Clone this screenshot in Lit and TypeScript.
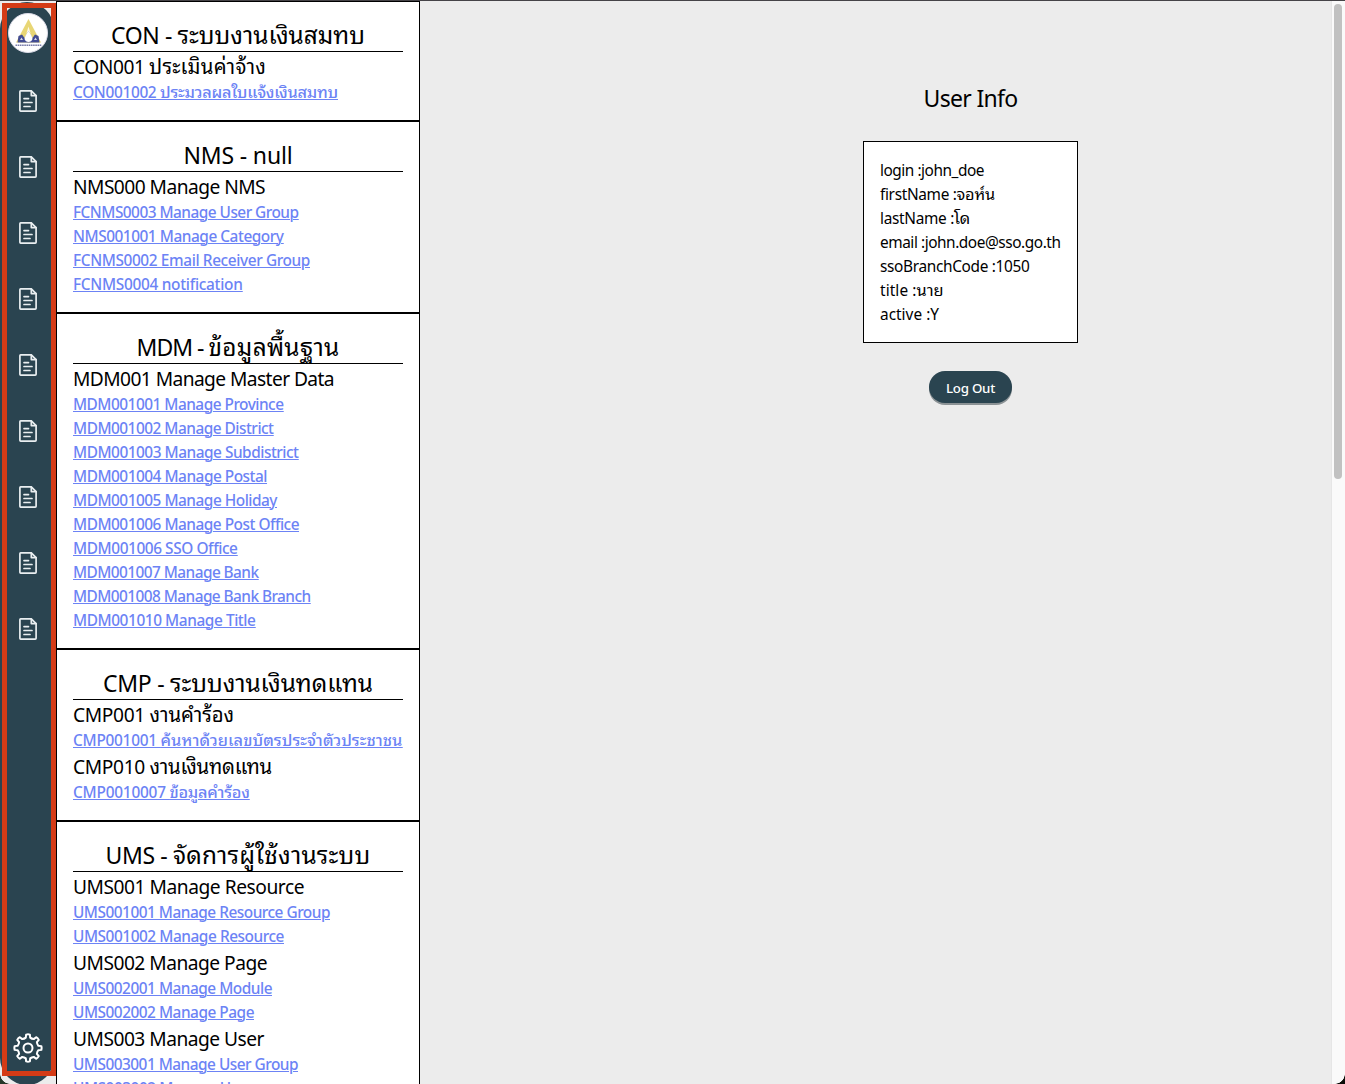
import { LitElement, html, css, svg } from "lit";
import { customElement } from "lit/decorators.js";

/** Text, its full width, and, where Thai follows Latin, the width of the Latin part. */
type Line = [text: string, width: number, lead?: number];
interface Group { head: Line; links: Line[] }
interface Module { title: Line; groups: Group[] }

const MODULES: Module[] = [
  {
    title: ["CON - ระบบงานเงินสมทบ", 254, 66.5],
    groups: [{ head: ["CON001 ประเมินค่าจ้าง", 193, 76], links: [["CON001002 ประมวลผลใบแจ้งเงินสมทบ", 265, 87]] }],
  },
  {
    title: ["NMS - null", 109],
    groups: [
      {
        head: ["NMS000 Manage NMS", 192],
        links: [
          ["FCNMS0003 Manage User Group", 225.5],
          ["NMS001001 Manage Category", 210.5],
          ["FCNMS0002 Email Receiver Group", 237],
          ["FCNMS0004 notification", 169.5],
        ],
      },
    ],
  },
  {
    title: ["MDM - ข้อมูลพื้นฐาน", 203, 72],
    groups: [
      {
        head: ["MDM001 Manage Master Data", 261],
        links: [
          ["MDM001001 Manage Province", 210.5],
          ["MDM001002 Manage District", 200.5],
          ["MDM001003 Manage Subdistrict", 225.5],
          ["MDM001004 Manage Postal", 194],
          ["MDM001005 Manage Holiday", 204],
          ["MDM001006 Manage Post Office", 226],
          ["MDM001006 SSO Office", 164.5],
          ["MDM001007 Manage Bank", 185.5],
          ["MDM001008 Manage Bank Branch", 237.5],
          ["MDM001010 Manage Title", 182.5],
        ],
      },
    ],
  },
  {
    title: ["CMP - ระบบงานเงินทดแทน", 270, 67],
    groups: [
      { head: ["CMP001 งานคำร้อง", 161, 76.5], links: [["CMP001001 ค้นหาด้วยเลขบัตรประจำตัวประชาชน", 329.5, 87.5]] },
      { head: ["CMP010 งานเงินทดแทน", 199, 76.5], links: [["CMP0010007 ข้อมูลคำร้อง", 176.5, 96.5]] },
    ],
  },
  {
    title: ["UMS - จัดการผู้ใช้งานระบบ", 265, 67.5],
    groups: [
      {
        head: ["UMS001 Manage Resource", 231],
        links: [["UMS001001 Manage Resource Group", 257], ["UMS001002 Manage Resource", 211]],
      },
      {
        head: ["UMS002 Manage Page", 194],
        links: [["UMS002001 Manage Module", 199], ["UMS002002 Manage Page", 181]],
      },
      {
        head: ["UMS003 Manage User", 191],
        links: [["UMS003001 Manage User Group", 225], ["UMS003002 Manage User", 179]],
      },
    ],
  },
];

const USER: Line[] = [
  ["login :john_doe", 104],
  ["firstName :จอห์น", 115, 76.5],
  ["lastName :โด", 90, 74],
  ["email :john.doe@sso.go.th", 180.5],
  ["ssoBranchCode :1050", 149.5],
  ["title :นาย", 63.5, 36.5],
  ["active :Y", 59],
];

/** A line of text whose runs are tracked so that each spans a given width. */
@customElement("fit-text")
class FitText extends LitElement {
  static properties = { line: { attribute: false } };
  declare line: Line;
  static styles = css`
    :host { display: inline-block; white-space: pre; vertical-align: top; text-decoration: inherit; }
    .run { text-decoration: inherit; }
    .thai { font-size: 1.06em; line-height: 0; }
  `;
  private get runs(): { text: string; width: number; thai: boolean }[] {
    const [text, width, lead] = this.line;
    if (lead === undefined) return [{ text, width, thai: false }];
    const cut = text.search(/[\u0e00-\u0e7f]/);
    return [
      { text: text.slice(0, cut), width: lead, thai: false },
      { text: text.slice(cut), width: width - lead, thai: true },
    ];
  }
  render() {
    return this.runs.map((r) => html`<span class="run ${r.thai ? "thai" : ""}">${r.text}</span>`);
  }
  async firstUpdated() {
    await document.fonts.ready;
    const spans = this.renderRoot.querySelectorAll<HTMLElement>(".run");
    this.runs.forEach((r, i) => {
      const run = spans[i];
      const natural = run.getBoundingClientRect().width;
      run.style.letterSpacing = "1px";
      const clusters = run.getBoundingClientRect().width - natural;
      run.style.letterSpacing = `${(r.width - natural) / clusters}px`;
    });
  }
}

const fit = (line: Line) => html`<fit-text .line=${line}></fit-text>`;

const pageIcon = svg`<svg class="page" viewBox="0 0 20 24" fill="none" stroke="#e9eef0" stroke-width="1.7" stroke-linejoin="round" stroke-linecap="round">
  <path d="M13.3 1.9H2.6Q1.9 1.9 1.9 2.7V21.2Q1.9 22.1 2.7 22.1H17.2Q18.1 22.1 18.1 21.2V6.6Z"/>
  <path d="M13.3 2V6.6H18"/>
  <path d="M6 9.6H10.5M6 13.5H14M6 17.5H12"/>
</svg>`;

const gearPath = (() => {
  const pts: string[] = [];
  const at = (r: number, deg: number) => {
    const a = ((deg - 90) * Math.PI) / 180;
    return `${(15 + r * Math.cos(a)).toFixed(2)} ${(15 + r * Math.sin(a)).toFixed(2)}`;
  };
  for (let i = 0; i < 8; i++) {
    const c = i * 45;
    pts.push(`${i ? "L" : "M"}${at(10.6, c - 12)}`);
    pts.push(`L${at(13.5, c - 8)}`, `Q${at(13.9, c)} ${at(13.5, c + 8)}`, `L${at(10.6, c + 12)}`);
    pts.push(`Q${at(9.8, c + 22.5)} ${at(10.6, c + 33)}`);
  }
  return pts.join("") + "Z";
})();

@customElement("app-root")
class AppRoot extends LitElement {
  static styles = css`
    :host { display: block; }
    * { box-sizing: border-box; }
    .frame {
      position: relative; display: flex; width: 1345px; height: 1084px; overflow: hidden;
      background: #ececec; border-top: 1px solid #454347; color: #000;
      font: 400 15.4px/24px "Noto Sans", "Noto Sans Thai Looped", "Sarabun", "Loma", "Noto Sans Thai", sans-serif;
    }
    .rail { width: 56px; flex: none; }
    .pill {
      width: 54px; height: 1083px; margin-top: 1px; border-radius: 27px; background: #2a4450;
      display: flex; flex-direction: column; align-items: center; padding: 11px 0 22px 2px;
    }
    .logo { width: 40px; height: 40px; flex: none; }
    .pages { display: flex; flex-direction: column; gap: 42px; margin-top: 36px; }
    .page { display: block; width: 20px; height: 24px; }
    .gear { width: 30px; height: 30px; margin-top: auto; }
    .marker {
      position: absolute; left: 2px; top: 2px; width: 54px; height: 1073px;
      border: 5px solid #d43b16;
    }
    .menu { width: 364px; flex: none; background: #fff; }
    .module { border: 1px solid #000; padding: 16px; }
    .title {
      height: 34px; border-bottom: 1px solid #000; text-align: center;
      font-size: 23px; line-height: 35px; white-space: nowrap;
    }
    .head { height: 28px; font-size: 19.2px; line-height: 30px; white-space: nowrap; }
    .link { display: block; height: 24px; line-height: 25px; font-weight: 500; color: #6c83f5; text-decoration: underline; white-space: nowrap;
      text-decoration-thickness: 1px; text-underline-offset: 1px; }
    .main {
      flex: 1; padding: 80px 0 0 190px; display: flex; flex-direction: column; align-items: center;
    }
    .heading { font-size: 23px; line-height: 34px; }
    .card { width: 215px; height: 202px; margin-top: 26px; border: 1px solid #000; background: #fff; padding: 16px; white-space: nowrap; }
    .row { height: 24px; line-height: 25px; }
    .button {
      width: 83px; height: 32px; margin-top: 28px; border: 0; border-radius: 16px; padding: 1px 0 0;
      background: #2a4450; color: #fff; font: 500 13.3px/32px "Noto Sans", sans-serif;
      box-shadow: 0 2px 0 #8b9295;
    }
    .track { width: 14px; flex: none; background: #fafafa; border-left: 1px solid #e6e6e6; padding: 3px 0 0 2px; }
    .thumb { width: 8px; height: 475px; border-radius: 4px; background: #c1c1c1; }
    .corner { position: absolute; bottom: 0; width: 10px; height: 10px; }
    .left { left: 0; background: radial-gradient(circle at 10px 0, transparent 9.5px, #26382a 10px); }
    .right { right: 0; background: radial-gradient(circle at 0 0, transparent 9.5px, #0b0d08 10px); }
  `;

  render() {
    return html`
      <div class="frame">
        <div class="rail">
          <div class="pill">
            <svg class="logo" viewBox="0 0 40 40">
              <circle cx="20" cy="20" r="19.5" fill="#fff" stroke="#dcdce8" />
              <path d="M20.5 6 L8 29.5 H33Z" fill="#e8d675" />
              <path d="M20.5 13.500 L18.500 20 H22.500Z" fill="#fdf9e6" />
              <path d="M9.500 29.500 L10.500 23 L14 21.500 L16.500 25 L20.500 18 L24.500 25 L27 21.500 L30.500 23 L31.500 29.500Z" fill="#424c93" />
              <path d="M20.500 18 Q16.500 23.500 16.500 26 Q17.500 29 20.500 29 Q23.500 29 24.500 26 Q24.500 23.500 20.500 18Z" fill="#fff" />
              <path d="M12 27 L13.500 24.500 L15 27Z M26 27 L27.500 24.500 L29 27Z" fill="#d9dbea" />
              <path d="M7.500 32.300 H33.500" stroke="#777ba9" stroke-width="1.600" stroke-dasharray="1.600 .6" />
            </svg>
            <div class="pages">${Array.from({ length: 9 }, () => pageIcon)}</div>
            <svg class="gear" viewBox="0 0 30 30" fill="none" stroke="#fff" stroke-width="2" stroke-linejoin="round">
              <path d=${gearPath} /><circle cx="15" cy="15" r="4.5" />
            </svg>
          </div>
        </div>
        <div class="menu">
          ${MODULES.map(
            (m) => html`<div class="module">
              <div class="title">${fit(m.title)}</div>
              ${m.groups.map(
                (g) => html`<div class="head">${fit(g.head)}</div>
                  ${g.links.map((l) => html`<a class="link">${fit(l)}</a>`)}`
              )}
            </div>`
          )}
        </div>
        <div class="main">
          <div class="heading">${fit(["User Info", 94])}</div>
          <div class="card">${USER.map((u) => html`<div class="row">${fit(u)}</div>`)}</div>
          <button class="button">${fit(["Log Out", 49])}</button>
        </div>
        <div class="track"><div class="thumb"></div></div>
        <div class="marker"></div>
        <div class="corner left"></div>
        <div class="corner right"></div>
      </div>
    `;
  }
}
